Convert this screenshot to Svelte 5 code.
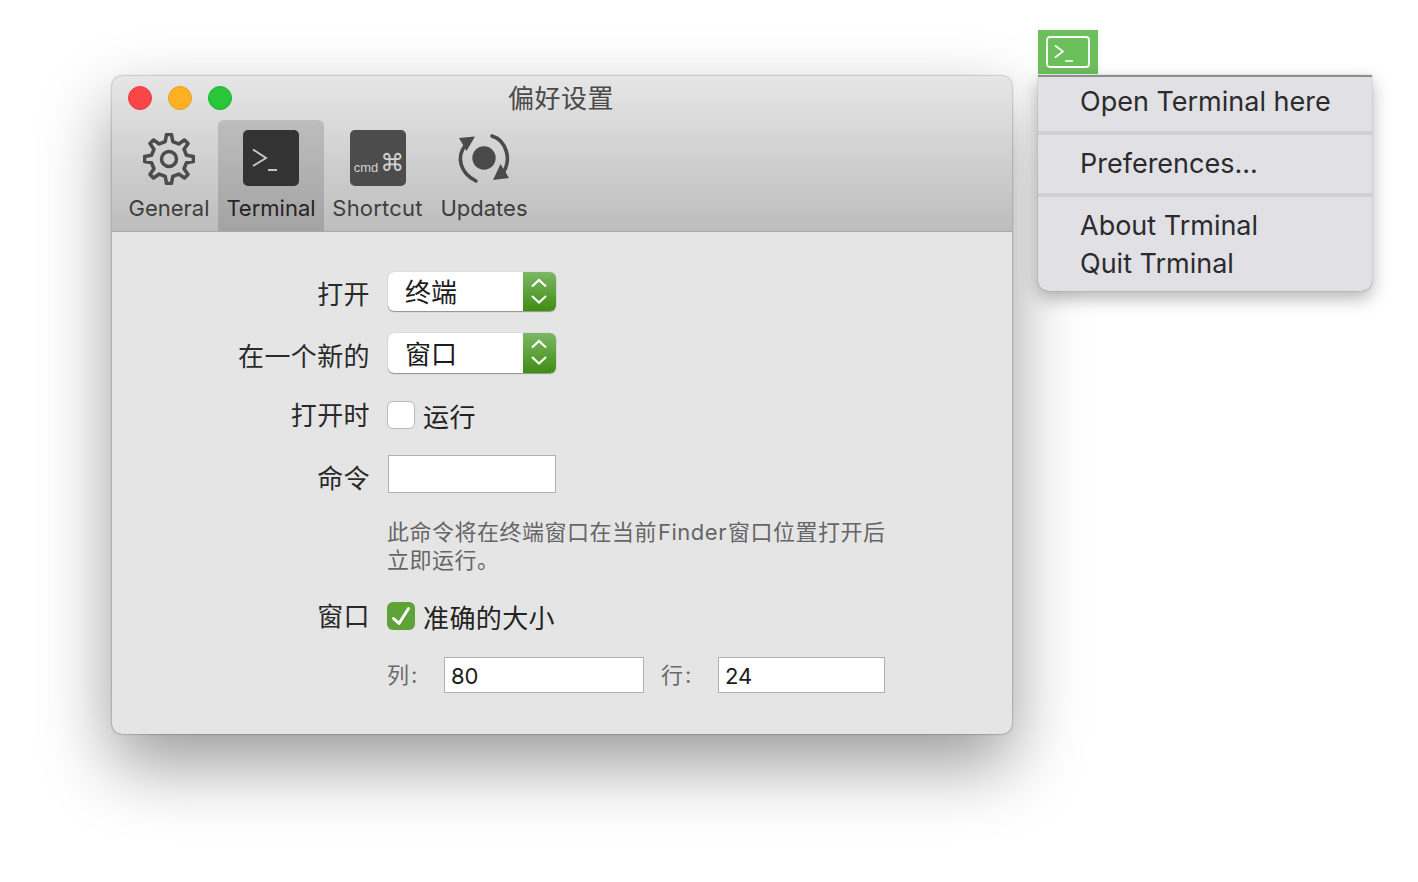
<script>
  const tabs = [
    { id: 'gear', label: 'General' },
    { id: 'term', label: 'Terminal', active: true },
    { id: 'cmd', label: 'Shortcut' },
    { id: 'upd', label: 'Updates' }
  ];
  function gearPath() {
    const cx = 25, cy = 25, teeth = 8;
    let d = '';
    for (let i = 0; i < teeth; i++) {
      const a = (i / teeth) * Math.PI * 2 - Math.PI / 2;
      const s = (2 * Math.PI) / teeth;
      const pts = [
        [17.2, a - s * 0.27],
        [23.6, a - s * 0.13],
        [23.6, a + s * 0.13],
        [17.2, a + s * 0.27]
      ];
      pts.forEach(([r, t], k) => {
        const x = (cx + r * Math.cos(t)).toFixed(2);
        const y = (cy + r * Math.sin(t)).toFixed(2);
        d += (i === 0 && k === 0 ? 'M' : 'L') + x + ' ' + y + ' ';
      });
    }
    return d + 'Z';
  }
  const gear = gearPath();
</script>

<div class="page">
  <section class="window">
    <header class="chrome">
      <div class="titlebar">
        <div class="lights">
          <span class="light red"></span>
          <span class="light amber"></span>
          <span class="light green"></span>
        </div>
        <div class="title">偏好设置</div>
      </div>
      <nav class="tabs">
        {#each tabs as tab}
          <div class="tab {tab.id}" class:active={tab.active}>
            <div class="icon">
              {#if tab.id === 'gear'}
                <svg class="gearicon" width="52" height="52" viewBox="0 0 50 50" fill="none" stroke="#4c4c4c" stroke-width="3.4" stroke-linejoin="round">
                  <path d={gear} />
                  <circle cx="25" cy="25" r="7.2" stroke-width="3.4" />
                </svg>
              {:else if tab.id === 'term'}
                <div class="key dark">
                  <svg width="56" height="56" viewBox="0 0 56 56" fill="none" stroke="#c4c4c4" stroke-width="2">
                    <path d="M10 19.5 L23 28 L10 36" />
                    <path d="M25 40 H34" />
                  </svg>
                </div>
              {:else if tab.id === 'cmd'}
                <div class="key grey">
                  <span class="cmdtext">cmd</span><span class="cmdglyph">⌘</span>
                </div>
              {:else}
                <svg width="56" height="56" viewBox="0 0 56 56" fill="none">
                  <circle cx="28" cy="28" r="11.7" fill="#4a4a4a" />
                  <path d="M9.5 15 C0 27 4 43 20 51" stroke="#4a4a4a" stroke-width="3.6" stroke-linecap="round" />
                  <path d="M36 6 C49 10 58 29 45 46" stroke="#4a4a4a" stroke-width="3.6" stroke-linecap="round" />
                  <path d="M3 8 L19 6.5 L10.5 21 Z" fill="#4a4a4a" />
                  <path d="M37 50 L53 48 L44.5 34 Z" fill="#4a4a4a" />
                </svg>
              {/if}
            </div>
            <div class="tablabel">{tab.label}</div>
          </div>
        {/each}
      </nav>
    </header>

    <div class="body">
      <div class="row r1">
        <div class="label">打开</div>
        <div class="select"><span class="seltext">终端</span><span class="stepper"><svg width="18" height="30" viewBox="0 0 18 30" fill="none" stroke="#fff" stroke-width="2.2"><path d="M2 9.5 L9 3 L16 9.5" /><path d="M2 19 L9 25.5 L16 19" /></svg></span></div>
      </div>
      <div class="row r2">
        <div class="label">在一个新的</div>
        <div class="select"><span class="seltext">窗口</span><span class="stepper"><svg width="18" height="30" viewBox="0 0 18 30" fill="none" stroke="#fff" stroke-width="2.2"><path d="M2 9.5 L9 3 L16 9.5" /><path d="M2 19 L9 25.5 L16 19" /></svg></span></div>
      </div>
      <div class="row r3">
        <div class="label">打开时</div>
        <div class="check"></div>
        <div class="checklabel">运行</div>
      </div>
      <div class="row r4">
        <div class="label">命令</div>
        <div class="field command"></div>
      </div>
      <p class="help">此命令将在终端窗口在当前<span class="finder">Finder</span>窗口位置打开后<br />立即运行。</p>
      <div class="row r5">
        <div class="label">窗口</div>
        <div class="check on">
          <svg width="28" height="28" viewBox="0 0 28 28" fill="none" stroke="#fff" stroke-width="3" stroke-linecap="round" stroke-linejoin="round"><path d="M6.5 16.5 L12 21.5 L21.5 6.5" /></svg>
        </div>
        <div class="checklabel">准确的大小</div>
      </div>
      <div class="sizes">
        <span class="sizelabel">列:</span>
        <div class="field cols">80</div>
        <span class="sizelabel rowslabel">行:</span>
        <div class="field rows">24</div>
      </div>
    </div>
  </section>

  <aside class="tray">
    <div class="trayicon">
      <svg width="44" height="32" viewBox="0 0 44 32" fill="none" stroke="#fff">
        <rect x="1" y="1" width="42" height="30" rx="3" stroke-width="1.8" />
        <path d="M9 9.5 L17 15.5 L9 21.5" stroke-width="1.6" />
        <path d="M19 25 H27" stroke-width="1.6" />
      </svg>
    </div>
    <div class="menu">
      <div class="group first"><div class="item">Open Terminal here</div></div>
      <div class="group"><div class="item">Preferences...</div></div>
      <div class="group last">
        <div class="item">About Trminal</div>
        <div class="item">Quit Trminal</div>
      </div>
    </div>
  </aside>
</div>

<style>
  :global(body) {
    margin: 0;
    background: #fff;
    overflow: hidden;
  }
  .page {
    display: flex;
    align-items: flex-start;
    width: 1418px;
    height: 882px;
    padding: 30px 0 0 112px;
    box-sizing: border-box;
    font-family: Inter, "Noto Sans CJK SC", sans-serif;
    color: #1f1f1f;
  }
  .window {
    width: 900px;
    height: 658px;
    margin-top: 46px;
    flex: none;
    border-radius: 10px;
    overflow: hidden;
    background: #e5e5e5;
    box-shadow: 0 30px 70px rgba(0, 0, 0, 0.4), 0 0 2px rgba(0, 0, 0, 0.55);
  }
  .chrome {
    height: 156px;
    box-sizing: border-box;
    background: linear-gradient(#e6e6e6, #bdbdbd);
    border-bottom: 1px solid #a9a9a9;
    display: flex;
    flex-direction: column;
  }
  .titlebar {
    height: 44px;
    position: relative;
    flex: none;
    display: flex;
    align-items: center;
    justify-content: center;
  }
  .lights {
    position: absolute;
    left: 16px;
    top: 10px;
    display: flex;
    gap: 16px;
  }
  .light {
    width: 24px;
    height: 24px;
    border-radius: 50%;
    box-sizing: border-box;
  }
  .red { background: #fc4546; border: 1px solid #e3403f; }
  .amber { background: #fdb024; border: 1px solid #e5a023; }
  .green { background: #28c73a; border: 1px solid #23b032; }
  .title {
    font-size: 26px;
    line-height: 44px;
    color: #4a4a4a;
    letter-spacing: 0.5px;
    margin-top: 1px;
    margin-right: 2px;
  }
  .tabs {
    display: flex;
    flex: 1;
    padding-left: 8px;
  }
  .tab {
    display: flex;
    flex-direction: column;
    align-items: center;
    height: 111px;
    box-sizing: border-box;
    color: #3e3e3e;
  }
  .tab.gear { width: 98px; }
  .tab.term { width: 106px; }
  .tab.cmd { width: 107px; }
  .tab.upd { width: 106px; }
  .tab.active {
    background: rgba(0, 0, 0, 0.135);
    border-radius: 6px 6px 0 0;
    color: #242424;
  }
  .icon {
    height: 56px;
    margin-top: 10px;
    display: flex;
    align-items: center;
    justify-content: center;
    flex: none;
  }
  .gearicon { margin: 2px 1px 0 0; }
  .tablabel {
    font-size: 22px;
    line-height: 28px;
    margin-top: 8px;
    white-space: nowrap;
  }
  .tab.cmd .tablabel { letter-spacing: 0.2px; }
  .key {
    width: 56px;
    height: 56px;
    border-radius: 5px;
    position: relative;
  }
  .key svg { display: block; }
  .key.dark { background: #333; }
  .key.grey {
    background: #4c4c4c;
    display: flex;
    align-items: flex-end;
    justify-content: center;
    color: #d2d2d2;
    line-height: 1;
    padding: 0 0 12px 3px;
    box-sizing: border-box;
  }
  .cmdtext { font-family: "Liberation Sans", sans-serif; font-size: 13px; margin-right: 2px; }
  .cmdglyph { font-family: "DejaVu Sans", sans-serif; font-size: 24px; line-height: 22px; }
  .body {
    height: 502px;
    position: relative;
    padding-top: 40px;
    box-sizing: border-box;
  }
  .row {
    display: flex;
    align-items: center;
  }
  .label {
    width: 258px;
    flex: none;
    text-align: right;
    font-size: 26px;
    line-height: 36px;
    letter-spacing: 0.4px;
    color: #2a2a2a;
  }
  .select {
    margin-left: 18px;
    width: 168px;
    background: #fff;
    border-radius: 6px;
    display: flex;
    justify-content: space-between;
    box-shadow: 0 1px 1px rgba(0, 0, 0, 0.35), 0 0 1px rgba(0, 0, 0, 0.3);
    overflow: hidden;
    align-self: flex-start;
  }
  .r1 .select { height: 39px; }
  .r2 .select { height: 40px; }
  .r1 { height: 39px; }
  .r2 { height: 40px; margin-top: 22px; }
  .r1 .label { transform: translateY(3px); }
  .r2 .label { transform: translateY(4px); }
  .r3 .label, .r5 .label { transform: translateY(1px); }
  .seltext {
    font-size: 26px;
    line-height: 40px;
    padding-left: 17px;
    color: #1c1c1c;
    transform: translateY(1px);
  }
  .r2 .seltext { transform: translateY(2px); }
  .stepper {
    width: 33px;
    padding-right: 2px;
    box-sizing: border-box;
    background: linear-gradient(#7cb766, #3f8d11);
    display: flex;
    align-items: center;
    justify-content: center;
  }
  .r3 { height: 28px; margin-top: 28px; }
  .check {
    margin-left: 17px;
    width: 28px;
    height: 28px;
    box-sizing: border-box;
    background: #fff;
    border: 1px solid #b9b9b9;
    border-radius: 6px;
    flex: none;
  }
  .check.on {
    background: #5fa237;
    border: none;
  }
  .check svg { display: block; }
  .checklabel {
    font-size: 26px;
    line-height: 36px;
    letter-spacing: 0.4px;
    margin-left: 8px;
    color: #232323;
    transform: translateY(3px);
  }
  .r4 { height: 38px; margin-top: 26px; }
  .r4 .label { transform: translateY(5px); }
  .field {
    background: #fff;
    border: 1px solid #b0b0b0;
    box-sizing: border-box;
    flex: none;
    font-size: 22px;
    color: #1c1c1c;
  }
  .command {
    margin-left: 18px;
    width: 168px;
    height: 38px;
  }
  .help {
    margin: 25px 0 0 275px;
    width: 520px;
    font-size: 22px;
    line-height: 28px;
    letter-spacing: 0.5px;
    color: #666;
  }
  .finder { margin: 0 1px; }
  .r5 { height: 28px; margin-top: 28px; }
  .sizes {
    display: flex;
    align-items: center;
    margin: 27px 0 0 275px;
    height: 36px;
  }
  .sizelabel {
    font-size: 22px;
    line-height: 36px;
    letter-spacing: 2px;
    color: #6a6a6a;
    width: 57px;
    flex: none;
    white-space: nowrap;
  }
  .rowslabel { margin-left: 17px; }
  .cols, .rows {
    height: 36px;
    line-height: 37px;
    padding-left: 6px;
  }
  .cols { width: 200px; }
  .rows { width: 167px; }
  .tray {
    margin-left: 26px;
    flex: none;
    width: 334px;
    display: flex;
    flex-direction: column;
  }
  .trayicon {
    width: 60px;
    height: 44px;
    background: #6cc05c;
    display: flex;
    align-items: flex-start;
    justify-content: center;
    padding-top: 6px;
    box-sizing: border-box;
  }
  .trayicon svg { display: block; }
  .menu {
    margin-top: 1px;
    height: 216px;
    box-sizing: border-box;
    background: #e0e0e5;
    border-top: 2px solid #8f8f8f;
    border-radius: 0 0 10px 10px;
    box-shadow: 0 7px 18px rgba(0, 0, 0, 0.3), 0 0 1px rgba(0, 0, 0, 0.6);
    display: flex;
    flex-direction: column;
  }
  .group {
    border-bottom: 4px solid #cfcfd4;
    padding: 10px 0 10px;
  }
  .group.first { padding: 6px 0 10px; }
  .group.last { border-bottom: none; padding: 10px 0 0; }
  .item {
    font-size: 27px;
    line-height: 38px;
    padding-left: 42px;
    color: #2b2b2d;
    white-space: nowrap;
  }
</style>
